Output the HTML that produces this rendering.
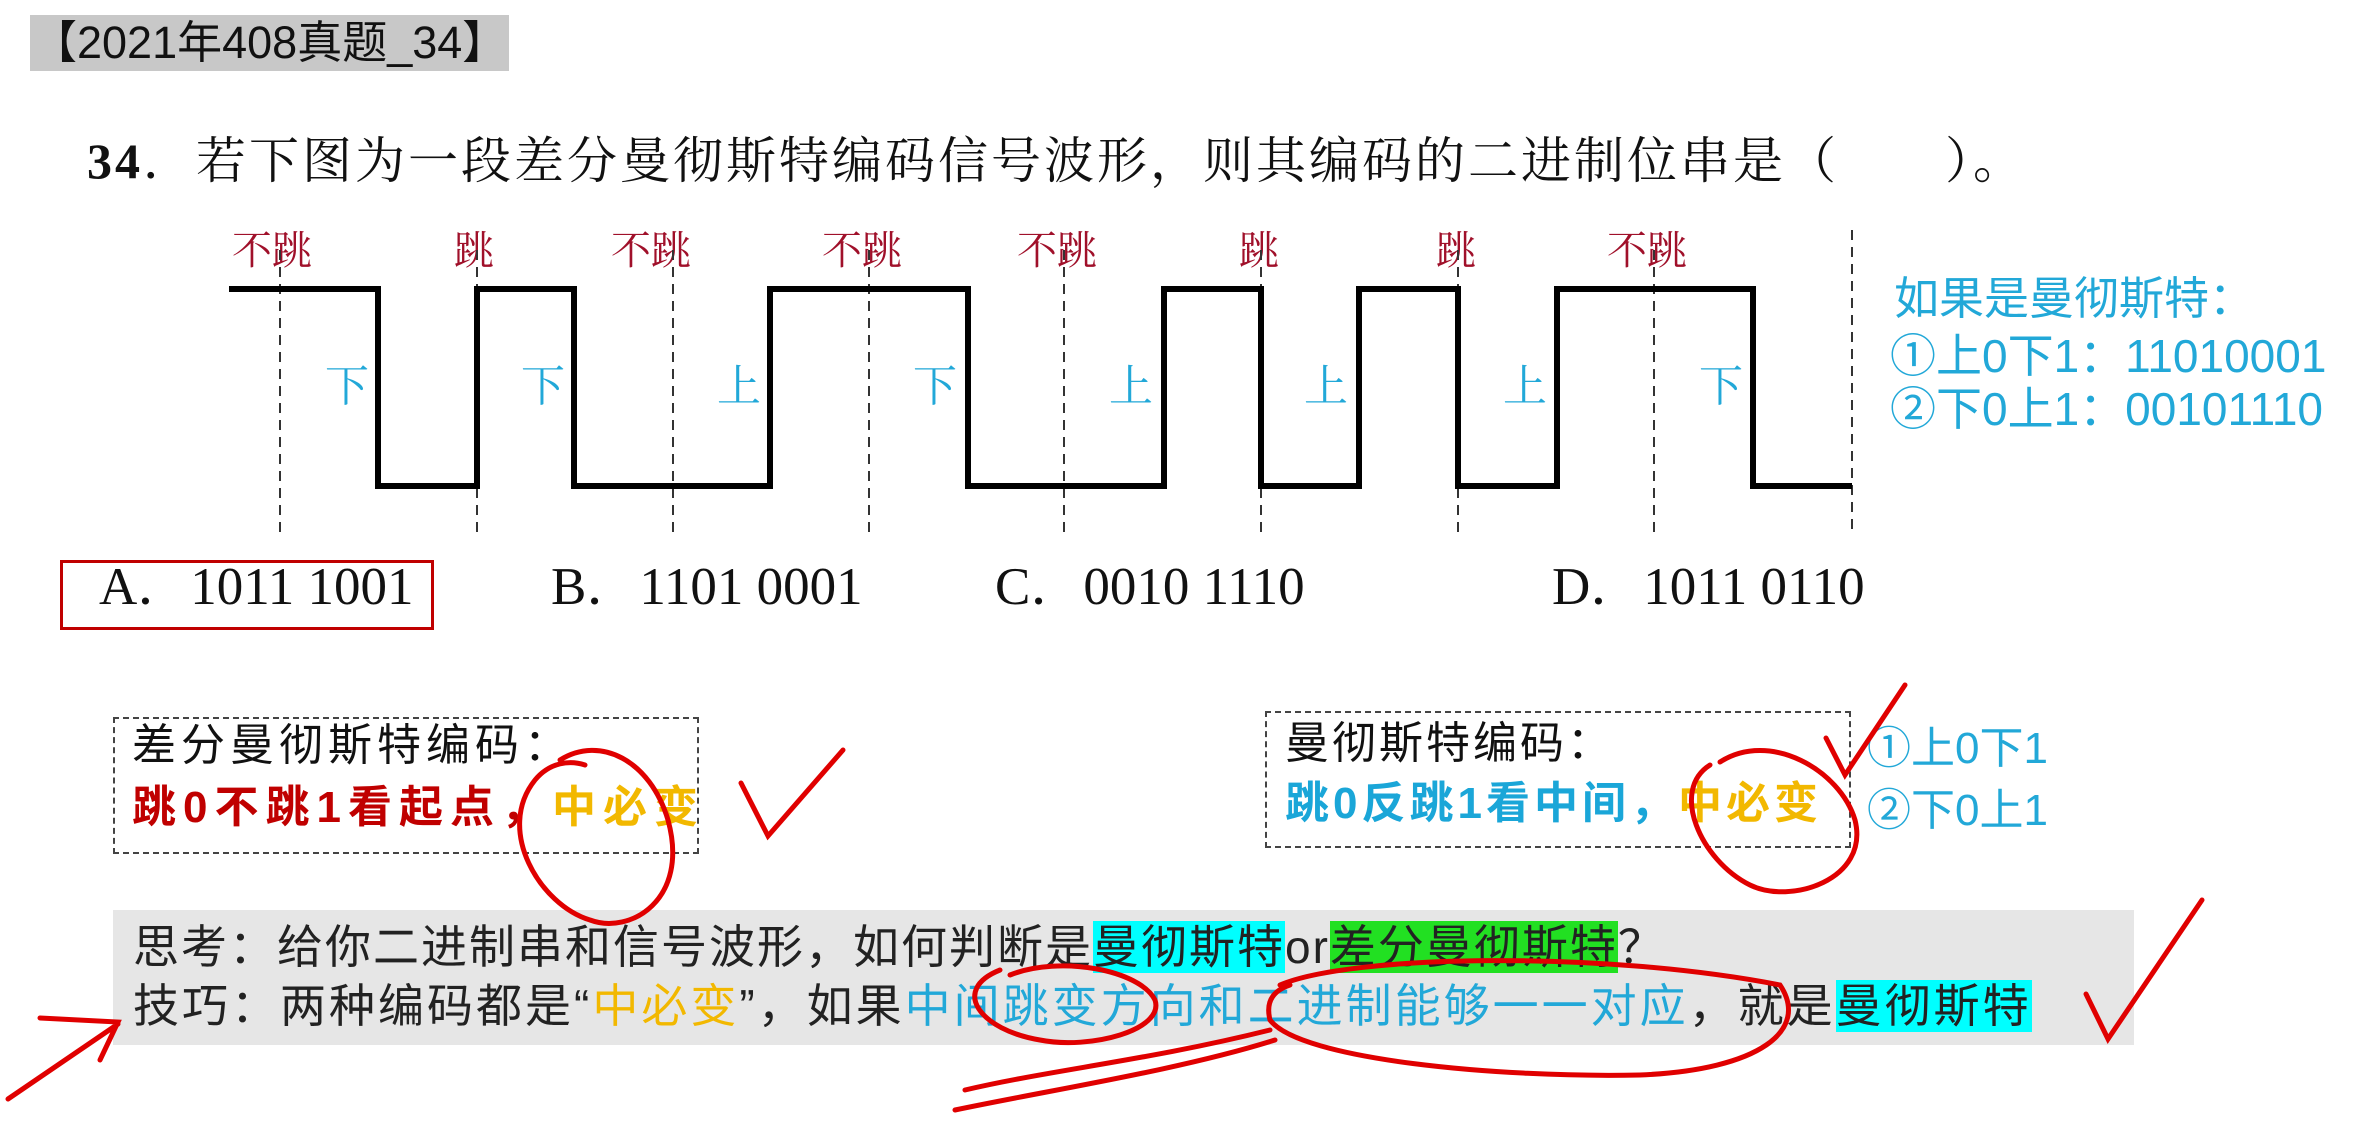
<!DOCTYPE html>
<html><head><meta charset="utf-8"><style>
body{margin:0;width:2361px;height:1132px;background:#fff;position:relative;overflow:hidden;font-family:"Liberation Sans","Noto Sans CJK SC",sans-serif}
.a{position:absolute;white-space:nowrap;line-height:1}
.serif{font-family:"Liberation Serif","Noto Serif CJK SC",serif}
.r{color:#a0102a}.b{color:#22a8d8}.y{color:#f2b800}
</style></head><body>
<div class="a" style="left:30px;top:15px;width:479px;height:56px;background:#c8c8c8"></div>
<div class="a" style="left:32px;top:20px;font-size:45px;color:#111">【2021年408真题_34】</div>
<div class="a serif" style="left:87px;top:136px;font-size:50px;letter-spacing:3px;color:#111"><b>34</b>．若下图为一段差分曼彻斯特编码信号波形，则其编码的二进制位串是（　　）。</div>

<div class="serif r" style="position:absolute;font-size:40px;top:231px;line-height:1">
<span class="a" style="left:232px">不跳</span><span class="a" style="left:454px">跳</span><span class="a" style="left:611px">不跳</span><span class="a" style="left:822px">不跳</span><span class="a" style="left:1017px">不跳</span><span class="a" style="left:1239px">跳</span><span class="a" style="left:1436px">跳</span><span class="a" style="left:1607px">不跳</span>
</div>
<div class="serif b" style="position:absolute;font-size:44px;top:365px;line-height:1">
<span class="a" style="left:325px">下</span><span class="a" style="left:521px">下</span><span class="a" style="left:717px">上</span><span class="a" style="left:913px">下</span><span class="a" style="left:1109px">上</span><span class="a" style="left:1304px">上</span><span class="a" style="left:1503px">上</span><span class="a" style="left:1699px">下</span>
</div>
<div class="a b" style="left:1894px;top:276px;font-size:45px">如果是曼彻斯特：</div>
<div class="a b" style="left:1890px;top:333px;font-size:46px">①上0下1：11010001</div>
<div class="a b" style="left:1890px;top:386px;font-size:46px">②下0上1：00101110</div>

<div class="a" style="left:60px;top:560px;width:368px;height:64px;border:3px solid #c00000"></div>
<div class="a serif" style="left:99px;top:561px;font-size:53px;color:#111">A．1011 1001</div>
<div class="a serif" style="left:551px;top:561px;font-size:53px;color:#111">B．1101 0001</div>
<div class="a serif" style="left:995px;top:561px;font-size:53px;color:#111">C．0010 1110</div>
<div class="a serif" style="left:1552px;top:561px;font-size:53px;color:#111">D．1011 0110</div>

<div class="a" style="left:113px;top:717px;width:582px;height:133px;border:2px dashed #444"></div>
<div class="a" style="left:132px;top:724px;font-size:44px;letter-spacing:5px;color:#111">差分曼彻斯特编码：</div>
<div class="a" style="left:132px;top:786px;font-size:44px;letter-spacing:7px;font-weight:bold"><span style="color:#c00000">跳0不跳1看起点，</span><span class="y">中必变</span></div>

<div class="a" style="left:1265px;top:711px;width:582px;height:133px;border:2px dashed #444"></div>
<div class="a" style="left:1285px;top:722px;font-size:44px;letter-spacing:3px;color:#111">曼彻斯特编码：</div>
<div class="a" style="left:1285px;top:782px;font-size:44px;letter-spacing:4px;font-weight:bold"><span style="color:#1aa6d8">跳0反跳1看中间，</span><span class="y">中必变</span></div>
<div class="a b" style="left:1867px;top:727px;font-size:44px">①上0下1</div>
<div class="a b" style="left:1867px;top:789px;font-size:44px">②下0上1</div>

<div class="a" style="left:113px;top:910px;width:2021px;height:135px;background:#e6e6e6"></div>
<div class="a" style="left:133px;top:924px;font-size:46px;letter-spacing:2px;color:#222">思考：给你二进制串和信号波形，如何判断是<span style="background:#00ffff">曼彻斯特</span>or<span style="background:#22e022">差分曼彻斯特</span>？</div>
<div class="a" style="left:133px;top:983px;font-size:46px;letter-spacing:3px;color:#222">技巧：两种编码都是“<span class="y">中必变</span>”，如果<span class="b">中间跳变方向和二进制能够一一对应</span>，就是<span style="background:#00ffff">曼彻斯特</span></div>

<svg class="a" style="left:0;top:0" width="2361" height="1132">
<g stroke="#333" stroke-width="2" stroke-dasharray="10,7" fill="none">
<line x1="280" y1="250" x2="280" y2="535"/><line x1="477" y1="250" x2="477" y2="535"/><line x1="673" y1="250" x2="673" y2="535"/><line x1="869" y1="250" x2="869" y2="535"/><line x1="1064" y1="250" x2="1064" y2="535"/><line x1="1261" y1="250" x2="1261" y2="535"/><line x1="1458" y1="250" x2="1458" y2="535"/><line x1="1654" y1="250" x2="1654" y2="535"/><line x1="1852" y1="230" x2="1852" y2="535"/>
</g>
<polyline fill="none" stroke="#000" stroke-width="6" points="229,289 378,289 378,486 477,486 477,289 574,289 574,486 770,486 770,289 968,289 968,486 1164,486 1164,289 1261,289 1261,486 1359,486 1359,289 1458,289 1458,486 1557,486 1557,289 1753,289 1753,486 1852,486"/>
<g fill="none" stroke="#e00000" stroke-width="5" stroke-linecap="round">
<path d="M560,760 C600,735 650,760 668,820 C690,900 630,935 590,920 C540,905 495,830 535,780 C550,762 570,760 585,765"/>
<path d="M741,783 L768,836 L843,750"/>
<path d="M1720,762 C1770,730 1840,770 1855,820 C1870,880 1790,905 1750,885 C1700,860 1670,790 1710,765"/>
<path d="M1826,738 L1845,775 L1905,685"/>
<path d="M1010,975 C1060,955 1140,970 1155,1000 C1165,1030 1090,1050 1040,1040 C980,1030 950,990 1000,970"/>
<path d="M1280,985 C1350,955 1600,950 1780,985 C1810,1030 1760,1070 1640,1075 C1500,1078 1300,1060 1270,1020 C1265,1000 1275,990 1290,985"/>
<path d="M965,1090 C1050,1070 1150,1060 1270,1030"/>
<path d="M955,1110 C1050,1090 1180,1070 1275,1040"/>
<path d="M2086,994 L2108,1039 L2202,900"/>
<path d="M8,1099 L118,1024 M40,1018 L118,1022 L100,1060"/>
</g>
</svg>
</body></html>
